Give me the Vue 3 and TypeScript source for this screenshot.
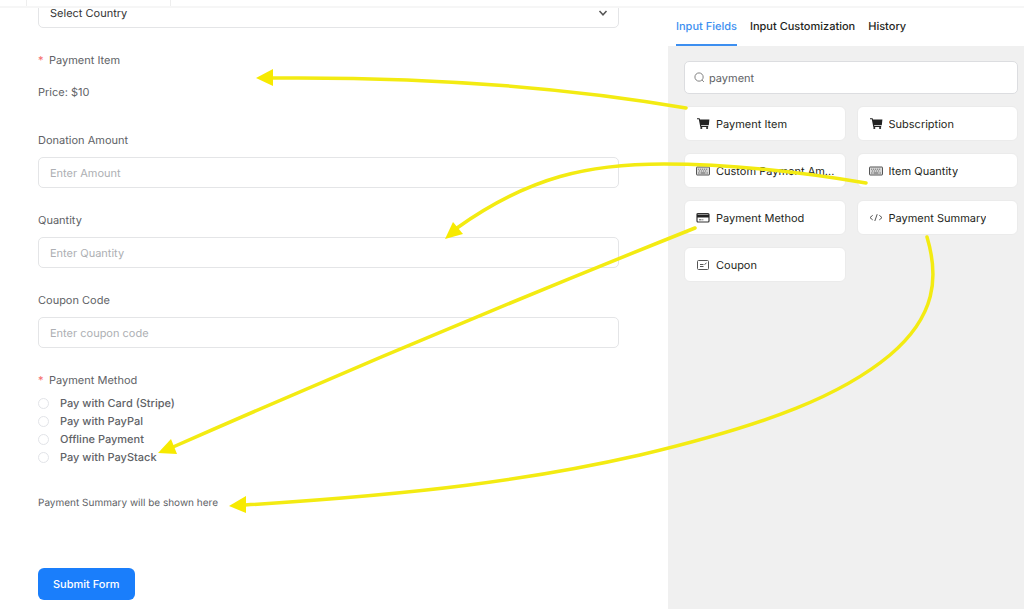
<script setup lang="ts">
import { ref } from 'vue'

type IconName = 'cart' | 'keyboard' | 'card' | 'code' | 'coupon'

interface FieldCard {
  label: string
  icon: IconName
}

const tabs = ['Input Fields', 'Input Customization', 'History']
const activeTab = ref('Input Fields')
const search = ref('payment')
const country = ref('')
const method = ref('')
const amount = ref('')
const quantity = ref('')
const coupon = ref('')

const cards: FieldCard[] = [
  { label: 'Payment Item', icon: 'cart' },
  { label: 'Subscription', icon: 'cart' },
  { label: 'Custom Payment Am...', icon: 'keyboard' },
  { label: 'Item Quantity', icon: 'keyboard' },
  { label: 'Payment Method', icon: 'card' },
  { label: 'Payment Summary', icon: 'code' },
  { label: 'Coupon', icon: 'coupon' },
]

const methods = ['Pay with Card (Stripe)', 'Pay with PayPal', 'Offline Payment', 'Pay with PayStack']

const arrows = [
  { line: 'M686 108 Q500 76 272 78', head: '256,78 273,69 273,86' },
  { line: 'M866 183 C770 167 700 164 664 164 C590 164 530 176 457 228', head: '445,239 453,222 463,234' },
  { line: 'M695 228 Q432 333 173 447', head: '158,453 171,439 177,454' },
  {
    line: 'M927 237 C939 277 936 316 890 355 C842 395 770 424 640 455 C530 480 420 494 245 505',
    head: '229,506 246,496 246,513',
  },
]
</script>

<template>
  <div class="editor">
    <header class="topbar"><span class="cell first"></span><span class="cell second"></span></header>
    <div class="body">
      <main class="canvas">
        <form class="form" @submit.prevent>
          <div class="select-wrap">
            <select v-model="country" class="control" aria-label="Country">
              <option value="">Select Country</option>
            </select>
            <svg class="chevron" viewBox="0 0 10 10" aria-hidden="true">
              <path d="M1.500 3 5 6.800 8.500 3" />
            </svg>
          </div>
          <section class="field">
            <h3 class="label required">Payment Item</h3>
            <p class="price">Price: $10</p>
          </section>
          <div class="field">
            <label class="label" for="amount">Donation Amount</label>
            <input id="amount" v-model="amount" class="control" type="text" placeholder="Enter Amount" />
          </div>
          <div class="field">
            <label class="label" for="quantity">Quantity</label>
            <input id="quantity" v-model="quantity" class="control" type="text" placeholder="Enter Quantity" />
          </div>
          <div class="field">
            <label class="label" for="coupon">Coupon Code</label>
            <input id="coupon" v-model="coupon" class="control" type="text" placeholder="Enter coupon code" />
          </div>
          <fieldset class="methods">
            <legend class="label required">Payment Method</legend>
            <label v-for="m in methods" :key="m" class="option">
              <input v-model="method" type="radio" name="method" :value="m" />
              <span>{{ m }}</span>
            </label>
          </fieldset>
          <p class="summary">Payment Summary will be shown here</p>
          <button class="submit" type="submit">Submit Form</button>
        </form>
      </main>

      <aside class="sidebar">
        <nav class="tabs">
          <button
            v-for="t in tabs"
            :key="t"
            type="button"
            class="tab"
            :class="{ active: t === activeTab }"
            @click="activeTab = t"
          >
            {{ t }}
          </button>
        </nav>
        <div class="panel">
          <label class="search">
            <svg viewBox="0 0 12 12" aria-hidden="true">
              <circle cx="5.500" cy="5.500" r="4.500" />
              <path d="m8.800 8.800 2 2" />
            </svg>
            <input v-model="search" type="text" aria-label="Search fields" />
          </label>
          <div class="cards">
            <button v-for="c in cards" :key="c.label" type="button" class="card">
              <svg v-if="c.icon === 'cart'" class="icon" viewBox="0 0 14 14" aria-hidden="true">
                <path
                  class="solid"
                  d="M1 1.200h2.600l.4 1.200h9.400l-.6 5.800H5.100l.2.700h6.900v1.100H4.300L2.800 2.200H1zM5.300 9.900a1.100 1.100 0 1 1 0 2.200 1.100 1.100 0 0 1 0-2.200zM11.100 9.900a1.100 1.100 0 1 1 0 2.200 1.100 1.100 0 0 1 0-2.200z"
                />
              </svg>
              <svg v-else-if="c.icon === 'keyboard'" class="icon" viewBox="0 0 14 14" aria-hidden="true">
                <rect class="plate" x=".5" y="3" width="13" height="8" rx=".5" />
                <path class="keys" d="M2.200 5.200h9.600M2.800 7h8.400" />
                <path class="soft" d="M2.200 9h1.300M4.500 9h5M10.500 9h1.300" />
              </svg>
              <svg v-else-if="c.icon === 'card'" class="icon" viewBox="0 0 14 14" aria-hidden="true">
                <rect class="heavy" x="1" y="2.500" width="12" height="8.500" rx="1" />
                <path class="solid" d="M1 3.500h12v3H1z" />
                <path class="soft" d="M3 8.800h2.500M6.300 8.800h1" />
              </svg>
              <svg v-else-if="c.icon === 'code'" class="icon" viewBox="0 0 14 14" aria-hidden="true">
                <path class="soft" d="M3.700 4.300 1 6.600l2.700 2.300M10.300 4.300 13 6.600l-2.700 2.300M8.200 3.200 5.800 10" />
              </svg>
              <svg v-else class="icon" viewBox="0 0 14 14" aria-hidden="true">
                <rect class="soft" x="1.500" y="2.500" width="11" height="9" rx="1" />
                <path class="soft" d="M4 6.500h3.500M4 8.500h3.500M8.500 6.500l2-1.500" />
              </svg>
              <span class="card-label">{{ c.label }}</span>
            </button>
          </div>
        </div>
      </aside>
    </div>

    <svg class="arrows" viewBox="0 0 1024 609" aria-hidden="true">
      <g v-for="a in arrows" :key="a.head">
        <path :d="a.line" />
        <polygon :points="a.head" />
      </g>
    </svg>
  </div>
</template>

<style>
body {
  margin: 0;
}
</style>

<style scoped>
.editor {
  position: relative;
  display: flex;
  flex-direction: column;
  min-height: 100vh;
  overflow: hidden;
  background: #fff;
  color: #606266;
  font-family: Inter, "Liberation Sans", sans-serif;
  font-size: 11px;
  line-height: 16px;
  text-rendering: geometricPrecision;
}
.editor *,
.editor *::before {
  box-sizing: border-box;
}
button,
input,
select {
  font: inherit;
  color: inherit;
  text-rendering: inherit;
}
.topbar {
  display: flex;
  height: 8px;
  border-bottom: 2px solid #f6f6f6;
}
.cell {
  border-right: 1px solid #eee;
}
.first {
  width: 27px;
}
.second {
  width: 144px;
}
.body {
  flex: 1;
  display: grid;
  grid-template-columns: minmax(0, 668fr) minmax(0, 356fr);
}
.canvas {
  overflow: hidden;
  padding: 0 49px 8px 38px;
}
.form {
  display: flex;
  flex-direction: column;
  gap: 24px;
  margin-top: -11px;
}
.select-wrap {
  display: grid;
  align-items: center;
}
.select-wrap > * {
  grid-area: 1 / 1;
}
.chevron {
  justify-self: end;
  width: 10px;
  height: 10px;
  margin-right: 11px;
  pointer-events: none;
  fill: none;
  stroke: #555;
  stroke-width: 1.5;
}
.control {
  width: 100%;
  height: 31px;
  padding: 0 11px;
  border: 1px solid #e4e5e7;
  border-radius: 5px;
  background: #fff;
  outline: none;
  appearance: none;
}
select.control {
  color: #333;
}
.control::placeholder {
  color: #adafb3;
  opacity: 1;
}
.field {
  display: flex;
  flex-direction: column;
  gap: 9px;
}
.label {
  margin: 0;
  padding: 0;
  font-size: 11px;
  font-weight: 400;
  line-height: 16px;
}
.required::before {
  content: "*";
  display: inline-block;
  width: 11px;
  color: #f56c6c;
}
.price {
  margin: 0;
  line-height: 31px;
}
.methods {
  margin: 0;
  padding: 0;
  border: 0;
  min-width: 0;
}
.methods .label {
  margin-bottom: 6px;
}
.option {
  display: flex;
  align-items: center;
  gap: 11px;
  height: 18px;
  font-weight: 500;
}
.option input {
  width: 11px;
  height: 11px;
  margin: 0;
  border: 1px solid #e2e4e8;
  border-radius: 50%;
  background: #fff;
  appearance: none;
}
.option input:checked {
  border: 3px solid #1a7efb;
}
.summary {
  margin: 5px 0 33px;
  font-size: 10px;
}
.submit {
  align-self: flex-start;
  height: 32px;
  padding: 0 15px;
  border: 0;
  border-radius: 6px;
  background: #1a7efb;
  color: #fff;
  font-weight: 500;
}
.sidebar {
  background: #f0f0f0;
}
.tabs {
  display: flex;
  gap: 13px;
  height: 38px;
  padding: 0 8px;
  background: #fff;
}
.tab {
  padding: 0;
  border: 0;
  border-bottom: 2px solid transparent;
  background: none;
  color: #1e1f21;
  font-weight: 500;
  white-space: nowrap;
}
.tab.active {
  border-color: #3d8ff0;
  color: #3d8ff0;
}
.panel {
  display: flex;
  flex-direction: column;
  gap: 12px;
  padding: 15px 6px 15px 16px;
}
.search {
  display: flex;
  align-items: center;
  gap: 4px;
  height: 33px;
  padding: 0 9px;
  border: 1px solid #dcdde0;
  border-radius: 5px;
  background: #fff;
}
.search svg {
  flex: none;
  width: 11px;
  height: 11px;
  fill: none;
  stroke: #777;
}
.search input {
  flex: 1;
  min-width: 0;
  padding: 0;
  border: 0;
  outline: none;
  background: none;
}
.cards {
  display: grid;
  grid-template-columns: repeat(2, minmax(0, 1fr));
  gap: 12px 11px;
}
.card {
  display: flex;
  align-items: center;
  gap: 6px;
  height: 35px;
  padding: 0 6px 0 11px;
  border: 1px solid #ebebeb;
  border-radius: 6px;
  background: #fff;
  color: #1e1f21;
  text-align: left;
}
.card-label {
  overflow: hidden;
  text-overflow: ellipsis;
  white-space: nowrap;
}
.icon {
  flex: none;
  width: 14px;
  height: 14px;
  fill: none;
  stroke: #333;
  stroke-width: 1;
}
.icon .solid {
  fill: #222;
  stroke: none;
}
.icon .plate {
  fill: #ddd;
  stroke: #555;
}
.icon .keys {
  stroke: #555;
  stroke-dasharray: 1 1;
}
.icon .soft {
  stroke: #555;
}
.icon .heavy {
  stroke-width: 1.2;
}
.arrows {
  position: absolute;
  top: 0;
  left: 0;
  width: 100%;
  pointer-events: none;
}
.arrows path {
  fill: none;
  stroke: #f3eb12;
  stroke-width: 3.5;
  stroke-linecap: round;
}
.arrows polygon {
  fill: #f7ea00;
}
</style>
